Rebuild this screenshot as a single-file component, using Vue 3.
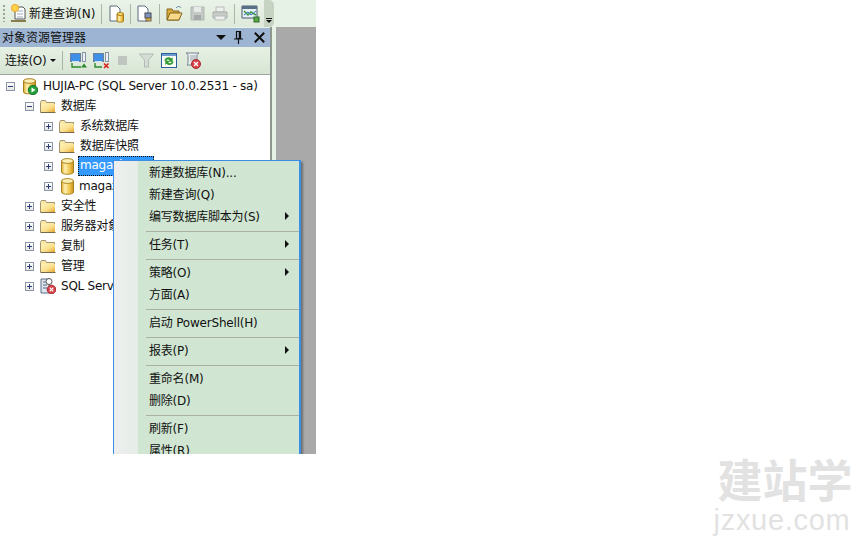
<script setup>
const rows = [
  { id: 1, level: 0, open: true, icon: 'server', text: 'HUJIA-PC (SQL Server 10.0.2531 - sa)' },
  { id: 2, level: 1, open: true, icon: 'folder', text: '数据库' },
  { id: 3, level: 2, icon: 'folder', text: '系统数据库' },
  { id: 4, level: 2, icon: 'folder', text: '数据库快照' },
  { id: 5, level: 2, icon: 'db', text: 'magazine', selected: true },
  { id: 6, level: 2, icon: 'db', text: 'magazine' },
  { id: 7, level: 1, icon: 'folder', text: '安全性' },
  { id: 8, level: 1, icon: 'folder', text: '服务器对象' },
  { id: 9, level: 1, icon: 'folder', text: '复制' },
  { id: 10, level: 1, icon: 'folder', text: '管理' },
  { id: 11, level: 1, icon: 'agent', text: 'SQL Server 代理' }
]
const menu = [
  { t: '新建数据库(N)...' }, { t: '新建查询(Q)' }, { t: '编写数据库脚本为(S)', sub: true }, { sep: true },
  { t: '任务(T)', sub: true }, { sep: true },
  { t: '策略(O)', sub: true }, { t: '方面(A)' }, { sep: true },
  { t: '启动 PowerShell(H)' }, { sep: true },
  { t: '报表(P)', sub: true }, { sep: true },
  { t: '重命名(M)' }, { t: '删除(D)' }, { sep: true },
  { t: '刷新(F)' }, { t: '属性(R)' }
]
</script>

<template>
  <div class="page">
    <svg class="defs" width="0" height="0">
      <defs>
        <linearGradient id="fold" x1="0" y1="0" x2="1" y2="1">
          <stop offset="0" stop-color="#fff3b8"/>
          <stop offset=".55" stop-color="#fadf8c"/>
          <stop offset="1" stop-color="#e5a52f"/>
        </linearGradient>
        <linearGradient id="cyl" x1="0" y1="0" x2="1" y2="0">
          <stop offset="0" stop-color="#e0ac30"/>
          <stop offset=".3" stop-color="#fdf0b4"/>
          <stop offset=".7" stop-color="#eec347"/>
          <stop offset="1" stop-color="#c98f1c"/>
        </linearGradient>
      </defs>
    </svg>
    <div class="shot">
      <div class="topbar">
        <div class="toolbar">
          <span class="grip"></span>
          <svg class="tb newq" width="18" height="20" viewBox="0 0 18 20">
            <path d="M5 4h8l2 2v10H5z" fill="#fff" stroke="#555"/>
            <path d="M7 8h6M7 11h6M7 14h6" stroke="#9ab"/>
            <circle cx="5" cy="5" r="3.600" fill="#fbd34a" stroke="#f2a52a"/>
            <path d="M1 18h15" stroke="#6a5a20" stroke-width="1.500"/>
          </svg>
          <span class="tb-label">新建查询(N)</span>
          <i class="tsep s1"></i>
          <svg class="tb" width="16" height="18" viewBox="0 0 16 18">
            <path d="M1 1h7l3 3v12H1z" fill="#fff" stroke="#5b6b80"/>
            <path d="M8 9v7c0 1.500 6.500 1.500 6.500 0V9z" fill="url(#cyl)" stroke="#a87c10"/>
            <ellipse cx="11.250" cy="9" rx="3.250" ry="1.500" fill="#f9da72" stroke="#a87c10"/>
          </svg>
          <i class="tsep s2"></i>
          <svg class="tb" width="16" height="18" viewBox="0 0 16 18">
            <path d="M1 1h7l3 3v12H1z" fill="#fff" stroke="#5b6b80"/>
            <rect x="8" y="8" width="6" height="5" fill="#7d95b8" stroke="#445"/>
            <rect x="9" y="13" width="5" height="3" fill="#d9b23c" stroke="#765"/>
          </svg>
          <i class="tsep s3"></i>
          <svg class="tb" width="17" height="17" viewBox="0 0 17 17">
            <path d="M1 15V4h5l1 2h6v9z" fill="#d9a93b" stroke="#84641c"/>
            <path d="M1 15l3-7h12l-3 7z" fill="#f7d98a" stroke="#84641c"/>
            <path d="M10 3c2-2 4-2 5 0" fill="none" stroke="#5c7fa8"/>
          </svg>
          <svg class="tb save" width="15" height="15" viewBox="0 0 15 15">
            <path d="M1 1h13v13H1z" fill="#c4c9c6" stroke="#b0b5b2"/>
            <path d="M4 1h7v5H4z" fill="#e8ebe9"/>
            <path d="M4 9h7v5H4z" fill="#a4aaa7"/>
          </svg>
          <svg class="tb print" width="16" height="15" viewBox="0 0 16 15">
            <path d="M4 1h8v5H4z" fill="#eef0ee" stroke="#b8bcb9"/>
            <path d="M1 6h14v6H1z" fill="#c8ccc9" stroke="#a9ada9"/>
            <path d="M3 10h10v4H3z" fill="#eef0ee" stroke="#b8bcb9"/>
          </svg>
          <i class="tsep s4"></i>
          <svg class="tb" width="19" height="18" viewBox="0 0 19 18">
            <path d="M1 1h15v12H1z" fill="#e8f0f8" stroke="#4a5a70"/>
            <path d="M1 1h15v3H1z" fill="#5a7088"/>
            <path d="M3 6l4 4 3-3 5 3" fill="none" stroke="#3a9a40" stroke-width="1.500"/>
            <path d="M3 10l4-3 3 3 5-4" fill="none" stroke="#3a70c0"/>
            <rect x="13" y="12" width="5" height="5" fill="#58a848" stroke="#2f6a2a"/>
          </svg>
          <span class="overflow">
            <i class="ov-line"></i>
            <i class="ov-arrow"></i>
          </span>
        </div>
      </div>

      <div class="body">
        <div class="panel">
          <div class="title">
            <span class="title-text">对象资源管理器</span>
            <i class="t-arrow"></i>
            <svg class="t-pin" width="9" height="13" viewBox="0 0 9 13">
              <path d="M2.500 .5h4v7h-4zM0 8h9M4.500 8v5" fill="none" stroke="#111" stroke-width="1.200"/>
              <path d="M5.500 1v6.500" stroke="#111" stroke-width="1.500"/>
            </svg>
            <svg class="t-close" width="11" height="11" viewBox="0 0 11 11">
              <path d="M.8.8l9.400 9.400M10.200.8L.8 10.200" stroke="#111" stroke-width="2"/>
            </svg>
          </div>
          <div class="oetools">
            <span class="connect">连接(O)</span>
            <i class="c-arrow"></i>
            <i class="osep"></i>
            <svg class="ot o1" width="18" height="17" viewBox="0 0 18 17">
              <rect x="1.500" y="1.500" width="10" height="8" fill="#3f8fe6" stroke="#6b7f9c"/>
              <path d="M3 9.500h7" stroke="#cfe3f7"/>
              <rect x="13.500" y=".5" width="3" height="9" fill="#eef1f5" stroke="#8995a6"/>
              <path d="M3 11v4h9" fill="none" stroke="#2a8a2a" stroke-width="1.400"/>
              <path d="M12 15.500l3-4 3 4z" fill="#2a8a2a"/>
            </svg>
            <svg class="ot o2" width="18" height="17" viewBox="0 0 18 17">
              <rect x="1.500" y="1.500" width="10" height="8" fill="#3f8fe6" stroke="#6b7f9c"/>
              <path d="M3 9.500h7" stroke="#cfe3f7"/>
              <rect x="13.500" y=".5" width="3" height="9" fill="#eef1f5" stroke="#8995a6"/>
              <path d="M3 11v4h7" fill="none" stroke="#2a8a2a" stroke-width="1.400"/>
              <path d="M12 11.500l4.500 4.500M16.500 11.500L12 16" stroke="#d8261c" stroke-width="1.700"/>
            </svg>
            <span class="ot stop"></span>
            <svg class="ot filter" width="15" height="15" viewBox="0 0 15 15">
              <path d="M.5 1h14l-5 6v7h-4V7z" fill="#d6dcd6" stroke="#b4bab4"/>
            </svg>
            <svg class="ot refresh" width="16" height="15" viewBox="0 0 16 15">
              <rect x=".5" y=".5" width="15" height="14" fill="#fbfcf6" stroke="#2d5f9a"/>
              <path d="M1 1h14v2H1z" fill="#6f9bd0"/>
              <path d="M3.500 8c0-3.500 4.500-5 7-2.500l1.200-1.200v4.400H7.300l1.500-1.500C7 5.800 5.500 6.500 5.300 8z" fill="#2f9a2f"/>
              <path d="M12.500 8.500c0 3.200-4.500 4.700-7 2.300l-1.200 1.200V7.800h4.400L7.200 9.300C9 11 10.500 10.200 10.700 8.500z" fill="#2f9a2f"/>
            </svg>
            <svg class="ot report" width="16" height="17" viewBox="0 0 16 17">
              <path d="M1 1h13c-2 1-2 2-2 3v9H2c1-1 1-2 1-3V4C3 3 3 2 1 1z" fill="#eef0f3" stroke="#75808e"/>
              <path d="M5 4h6M5 6h6M5 8h5" stroke="#9aa3ad"/>
              <circle cx="11" cy="12" r="4.500" fill="#d8444a" stroke="#a52a30"/>
              <path d="M9 10l4 4M13 10l-4 4" stroke="#fff" stroke-width="1.300"/>
            </svg>
          </div>
          <div class="tree">
            <div v-for="r in rows" :key="r.id" class="row" :class="'lv' + r.level">
              <span class="toggle"><i class="h"></i><i v-if="!r.open" class="v"></i></span>
              <svg v-if="r.icon === 'folder'" class="icon" width="16" height="13" viewBox="0 0 16 13">
                <path d="M.5 2.500l1-2h4l1 2h8v9.500H.5z" fill="#fbe9a8" stroke="#a09570"/>
                <path d="M1.500 4h13.500v8H1.500z" fill="url(#fold)"/>
                <path d="M.5 12.500h15" stroke="#77694a"/>
              </svg>
              <svg v-else-if="r.icon === 'db'" class="icon db" width="13" height="17" viewBox="0 0 13 17">
                <path d="M.5 3v11c0 3 12 3 12 0V3z" fill="url(#cyl)" stroke="#a88420"/>
                <ellipse cx="6.500" cy="3" rx="6" ry="2.400" fill="#fbeeb2" stroke="#a88420"/>
              </svg>
              <svg v-else-if="r.icon === 'server'" class="icon srv" width="15" height="17" viewBox="0 0 15 17">
                <path d="M.5 3v11c0 2.500 12 2.500 12 0V3z" fill="url(#cyl)" stroke="#a87c18"/>
                <ellipse cx="6.500" cy="3" rx="6" ry="2.300" fill="#fbeeb6" stroke="#a87c18"/>
                <circle cx="10" cy="12" r="4.700" fill="#22a03a" stroke="#14702a"/>
                <path d="M8.500 9.500l4 2.500-4 2.500z" fill="#fff"/>
              </svg>
              <svg v-else class="icon" width="16" height="16" viewBox="0 0 16 16">
                <path d="M1 1h8v14H1z" fill="#dfe5ee" stroke="#566a86"/>
                <path d="M3 4h4M3 7h4M3 10h4" stroke="#566a86"/>
                <circle cx="9" cy="3.500" r="3" fill="#fff" stroke="#555"/>
                <circle cx="11.500" cy="11.500" r="4.300" fill="#d8444a" stroke="#a52a30"/>
                <path d="M9.700 9.700l3.600 3.600M13.300 9.700l-3.600 3.600" stroke="#fff" stroke-width="1.200"/>
              </svg>
              <span class="label" :class="{ sel: r.selected }">{{ r.text }}</span>
            </div>
          </div>
        </div>
        <div class="gap"></div>
        <div class="gray"></div>
      </div>

      <div class="menu">
        <div class="gutter"></div>
        <div class="items">
          <template v-for="(m, i) in menu" :key="i">
            <div v-if="m.sep" class="sep"></div>
            <div v-else class="item">
              <span>{{ m.t }}</span>
              <i v-if="m.sub" class="arrow"></i>
            </div>
          </template>
        </div>
      </div>
    </div>

    <div class="mark">
      <div class="mark-cn">建站学</div>
      <div class="mark-en">jzxue.com</div>
    </div>
  </div>
</template>

<style>
html, body { margin: 0; background: #fff; }
</style>

<style scoped>
.page {
  position: relative;
  width: 864px;
  height: 540px;
  overflow: hidden;
  background: #fff;
  font-family: "DejaVu Sans", "Noto Sans CJK SC", sans-serif;
  font-size: 12px;
  color: #111;
}
.defs { position: absolute; }
.shot {
  position: relative;
  width: 316px;
  height: 454px;
  overflow: hidden;
  display: flex;
  flex-direction: column;
  background: #e6f2e6;
}
.topbar { height: 27px; flex: none; background: #e6f2e6; }
.toolbar {
  width: 274px;
  height: 27px;
  display: flex;
  align-items: center;
  box-sizing: border-box;
  padding-left: 3px;
  background: linear-gradient(#eaf3e8, #dde9da);
  border-radius: 0 0 5px 0;
}
.grip {
  width: 2px;
  height: 17px;
  margin-right: 5px;
  background: repeating-linear-gradient(#98a498 0 2px, transparent 2px 4px);
}
.tb { flex: none; }
.tb-label { margin: 0 0 2px 1px; width: 66px; white-space: nowrap; }
.tsep { width: 1px; height: 20px; background: #a9b5a9; flex: none; }
.newq { margin-top: -1px; }
.s1 { margin: 0 7px 0 6px; }
.s2 { margin: 0 6px 0 5px; }
.s3 { margin: 0 6px 0 6px; }
.save { margin-left: 7px; }
.print { margin-left: 7px; }
.s4 { margin: 0 6px 0 6px; }
.overflow {
  margin-left: 4px;
  width: 10px;
  height: 27px;
  display: flex;
  flex-direction: column;
  align-items: center;
  justify-content: flex-end;
  padding-bottom: 4px;
  box-sizing: border-box;
  gap: 1px;
  background: #c6d3c2;
  border-radius: 0 5px 5px 0;
}
.ov-line { width: 6px; height: 1px; background: #111; }
.ov-arrow { width: 0; height: 0; border: 3px solid transparent; border-top-color: #111; border-bottom-width: 0; }

.body { flex: 1; display: flex; min-height: 0; }
.panel { width: 270px; display: flex; flex-direction: column; flex: none; }
.title {
  height: 19px;
  margin-top: 1px;
  display: flex;
  align-items: center;
  background: #9db5d3;
  flex: none;
}
.title-text { margin: 0 0 3px 2px; width: 213px; }
.t-arrow { width: 0; height: 0; border: 5px solid transparent; border-top: 5px solid #111; border-bottom-width: 0; margin-left: 1px; }
.t-pin { margin-left: 8px; }
.t-close { margin-left: 11px; }
.oetools {
  height: 28px;
  flex: none;
  display: flex;
  align-items: center;
  background: linear-gradient(#e6f1e3, #d8e5d5);
  border-bottom: 1px solid #9ca69c;
  box-sizing: border-box;
}
.connect { margin: 0 0 2px 5px; width: 44px; white-space: nowrap; letter-spacing: -0.3px; }
.c-arrow { width: 0; height: 0; border: 3px solid transparent; border-top-color: #111; border-bottom-width: 0; margin-left: 1px; }
.osep { width: 1px; height: 19px; background: #a9b5a9; margin: 0 6px 0 6px; }
.ot { flex: none; }
.o2 { margin-left: 5px; }
.stop { width: 9px; height: 9px; background: #bfc6bf; margin-left: 8px; }
.filter { margin-left: 12px; }
.refresh { margin-left: 7px; }
.report { margin-left: 8px; }

.tree { flex: 1; background: #fff; padding-top: 1px; }
.row { height: 20px; display: flex; align-items: center; white-space: nowrap; }
.lv0 { padding-left: 6px; }
.lv1 { padding-left: 25px; }
.lv2 { padding-left: 44px; }
.toggle {
  position: relative;
  width: 9px;
  height: 9px;
  flex: none;
  box-sizing: border-box;
  border: 1px solid #8a96a8;
  background: linear-gradient(#fff, #e6e6e0);
}
.toggle .h { position: absolute; left: 1px; top: 3px; width: 5px; height: 1px; background: #2a3a78; }
.toggle .v { position: absolute; left: 3px; top: 1px; width: 1px; height: 5px; background: #2a3a78; }
.icon { flex: none; margin-left: 6px; }
.db { margin-left: 8px; }
.srv { margin-left: 8px; }
.label { margin-left: 4px; padding: 0 1px; line-height: 18px; letter-spacing: -0.24px; }
.lv0 .label { margin-left: 4px; }
.lv2 .db + .label { margin-left: 4px; }
.label.sel {
  box-sizing: border-box;
  width: 76px;
  height: 20px;
  background: #3399ff;
  color: #fff;
  outline: 1px dotted #111;
  outline-offset: -1px;
  padding-left: 2px;
}
.gap { width: 6px; flex: none; background: #e6f2e6; border-left: 2px solid #8f988f; box-sizing: border-box; }
.gray { flex: 1; background: #a9a9a9; }

.menu {
  position: absolute;
  left: 113px;
  top: 160px;
  width: 188px;
  height: 310px;
  display: flex;
  box-sizing: border-box;
  border: 1px solid #3b90e6;
  border-right-width: 2px;
  background: #d0e6d2;
  box-shadow: 2px 2px 2px rgba(0, 0, 0, 0.35);
}
.gutter { width: 24px; flex: none; background: linear-gradient(90deg, #edefee, #e6ede8); }
.items { flex: 1; min-width: 0; }
.item {
  position: relative;
  height: 22px;
  padding: 0 0 2px 11px;
  box-sizing: border-box;
  display: flex;
  align-items: center;
  white-space: nowrap;
  letter-spacing: -0.2px;
}
.sep { height: 6px; padding-top: 4px; box-sizing: border-box; margin-left: 8px; }
.sep::before { content: ""; display: block; width: 100%; height: 1px; background: #a8b0a8; }
.arrow {
  position: absolute;
  left: 147px;
  top: 7px;
  width: 0;
  height: 0;
  border: 4px solid transparent;
  border-left: 4px solid #111;
  border-right-width: 0;
}

.mark {
  position: absolute;
  left: 712px;
  top: 460px;
  width: 142px;
  color: #e2e2e2;
  text-align: center;
  font-family: "Liberation Sans", "Noto Sans CJK SC", sans-serif;
}
.mark-cn { font-size: 45px; line-height: 46px; font-weight: 700; padding-left: 4px; }
.mark-en { font-size: 29px; line-height: 28px; letter-spacing: 0.7px; margin-left: -2px; }
</style>
